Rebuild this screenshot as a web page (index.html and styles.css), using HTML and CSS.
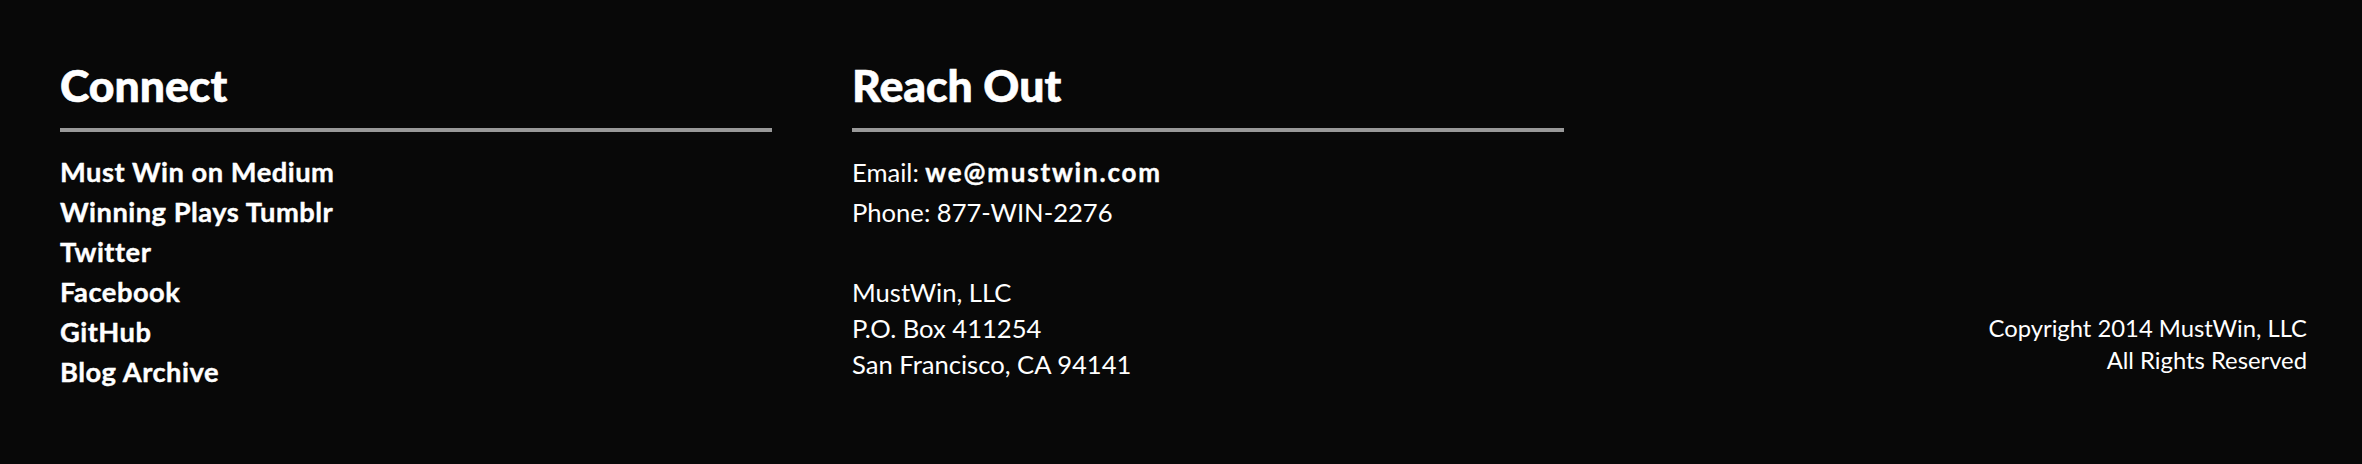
FILE: index.html
```html
<!DOCTYPE html>
<html lang="en">
<head>
<meta charset="utf-8">
<title>Footer</title>
<link rel="stylesheet" href="styles.css">
</head>
<body>
<footer class="footer">
  <section class="col">
    <h2 class="title">Connect</h2>
    <ul class="links">
      <li><a href="#">Must Win on Medium</a></li>
      <li><a href="#">Winning Plays Tumblr</a></li>
      <li><a href="#">Twitter</a></li>
      <li><a href="#">Facebook</a></li>
      <li><a href="#">GitHub</a></li>
      <li><a href="#">Blog Archive</a></li>
    </ul>
  </section>
  <section class="col">
    <h2 class="title">Reach Out</h2>
    <p class="contact">Email: <a href="#" class="strong">we@mustwin.com</a><br>Phone: 877-WIN-2276</p>
    <p class="address">MustWin, LLC<br>P.O. Box 411254<br>San Francisco, CA 94141</p>
  </section>
  <section class="col col-right">
    <p class="copyright">Copyright 2014 MustWin, LLC<br>All Rights Reserved</p>
  </section>
</footer>
</body>
</html>
```

FILE: styles.css
```css
html, body {
  margin: 0;
  padding: 0;
  background: #080808;
}

.footer {
  box-sizing: border-box;
  height: 464px;
  padding: 59px 55px 72px 60px;
  display: grid;
  grid-template-columns: 712px 712px 1fr;
  column-gap: 80px;
  align-items: stretch;
  color: #ffffff;
  font-family: "Lato", "Liberation Sans", sans-serif;
  font-size: 25.6px;
}

.col {
  min-width: 0;
}

.title {
  margin: 0;
  font-size: 44.5px;
  line-height: 52px;
  font-weight: 900;
  -webkit-text-stroke: 0.6px #ffffff;
  padding-bottom: 17px;
  border-bottom: 4px solid #999999;
}

.links {
  list-style: none;
  margin: 20px 0 0;
  padding: 0;
  font-size: 27.3px;
  line-height: 40px;
}

.links a {
  color: #ffffff;
  text-decoration: none;
  font-weight: 700;
  letter-spacing: 0.5px;
  -webkit-text-stroke: 0.4px #ffffff;
}

.contact {
  margin: 20px 0 0;
  line-height: 40px;
  font-weight: 400;
}

.contact .strong {
  color: #ffffff;
  text-decoration: none;
  font-weight: 700;
  font-size: 26px;
  letter-spacing: 1.8px;
  -webkit-text-stroke: 0.4px #ffffff;
}

.address {
  margin: 42px 0 0;
  line-height: 36px;
}

.col-right {
  display: flex;
  flex-direction: column;
  justify-content: flex-end;
  padding-bottom: 16px;
  text-align: right;
}

.copyright {
  margin: 0;
  font-size: 23.8px;
  line-height: 32px;
}
```
